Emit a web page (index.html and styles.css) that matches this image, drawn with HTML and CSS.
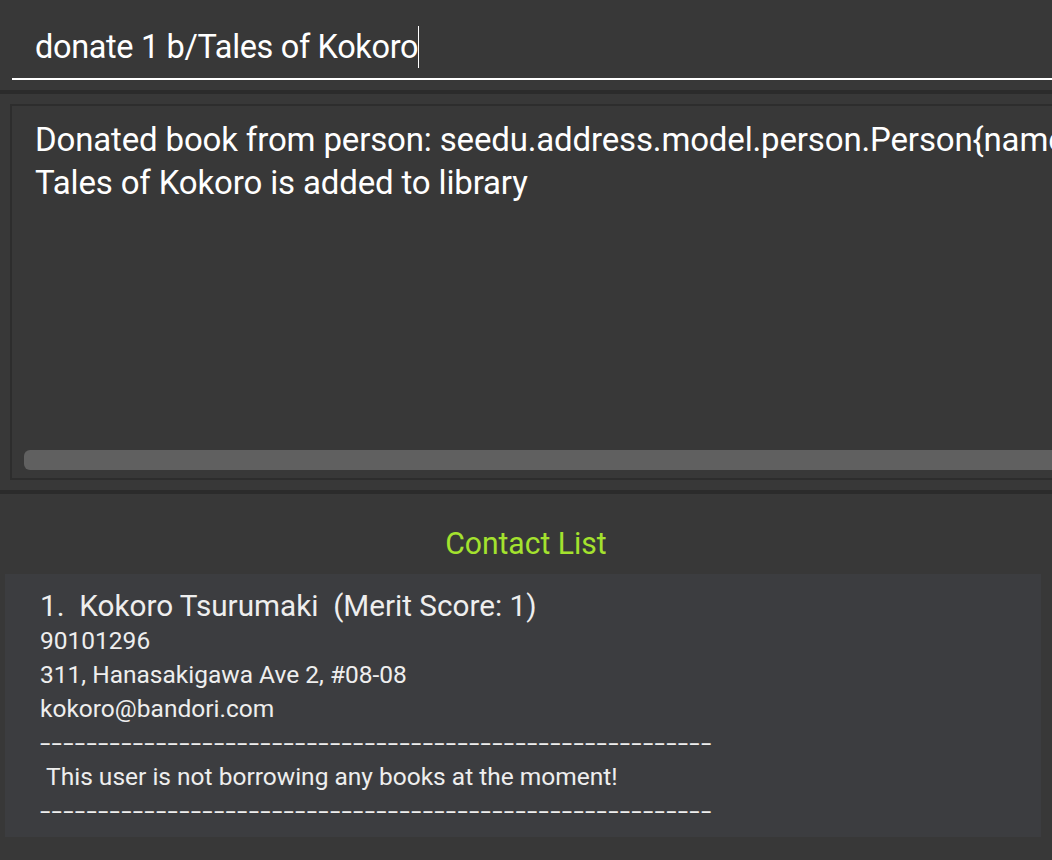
FILE: index.html
```html
<!DOCTYPE html>
<html>
<head>
<meta charset="utf-8">
<link rel="stylesheet" href="styles.css">
</head>
<body>
<div class="app">
  <div class="command">
    <div class="command-field"><span class="command-text">donate 1 b/Tales of Kokoro</span><span class="caret"></span></div>
  </div>
  <div class="divider"></div>
  <div class="result-pane">
    <div class="result-box">
      <div class="result-text">
        <div class="result-line">Donated book from person: seedu.address.model.person.Person{name=Kokoro Tsurumaki, phone=90101296, email=kokoro@bandori.com}</div>
        <div class="result-line">Tales of Kokoro is added to library</div>
      </div>
      <div class="hscroll"><div class="hscroll-thumb"></div></div>
    </div>
  </div>
  <div class="divider"></div>
  <div class="list-pane">
    <div class="list-title"><span class="narrow">Contact List</span></div>
    <div class="list">
      <div class="card">
        <div class="card-name">1.&nbsp; Kokoro Tsurumaki&nbsp; (Merit Score: 1)</div>
        <div class="card-line">90101296</div>
        <div class="card-line">311, Hanasakigawa Ave 2, #08-08</div>
        <div class="card-line">kokoro@bandori.com</div>
        <div class="card-line"><span class="dashes">----------------------------------------------------------</span></div>
        <div class="card-line">&nbsp;This user is not borrowing any books at the moment!</div>
        <div class="card-line"><span class="dashes">----------------------------------------------------------</span></div>
      </div>
    </div>
  </div>
</div>
</body>
</html>
```

FILE: styles.css
```css
html, body {
  margin: 0;
  padding: 0;
  background: #383838;
  overflow: hidden;
}
.app {
  width: 1052px;
  height: 860px;
  display: flex;
  flex-direction: column;
  font-family: Roboto, "Open Sans", sans-serif;
  color: #ffffff;
}
.command {
  height: 90px;
  flex: none;
  box-sizing: border-box;
  padding: 16px 0 0 12px;
}
.command-field {
  height: 64px;
  box-sizing: border-box;
  border-bottom: 2px solid #ffffff;
  padding-left: 23px;
  display: flex;
  align-items: center;
  font-size: 32.5px;
  letter-spacing: -0.35px;
  white-space: pre;
}
.caret {
  display: inline-block;
  width: 1px;
  height: 42px;
  background: #ffffff;
}
.divider {
  height: 4px;
  background: #2b2b2b;
  flex: none;
}
.result-pane {
  height: 396px;
  flex: none;
  box-sizing: border-box;
  padding: 10px 0 10px 10px;
}
.result-box {
  height: 100%;
  box-sizing: border-box;
  border: 2px solid #2d2d2d;
  border-right: none;
  display: flex;
  flex-direction: column;
  overflow: hidden;
}
.result-text {
  flex: 1;
  padding: 12px 0 0 23px;
  font-size: 33px;
  letter-spacing: -0.15px;
  line-height: 43px;
  overflow: hidden;
}
.result-line {
  white-space: pre;
}
.hscroll {
  flex: none;
  padding: 0 0 8px 12px;
}
.hscroll-thumb {
  height: 20px;
  background: #606060;
  border-radius: 6px 0 0 6px;
}
.list-pane {
  flex: 1;
  display: flex;
  flex-direction: column;
}
.list-title {
  text-align: center;
  color: #a4e22e;
  font-size: 32px;
  margin-top: 30px;
  height: 50px;
  line-height: 38px;
}
.narrow {
  display: inline-block;
  transform: scaleX(0.94);
}
.list {
  padding: 0 11px 0 5px;
}
.card {
  background: #3c3d40;
  height: 263px;
  box-sizing: border-box;
  padding: 14px 0 0 35px;
  color: #eeeeee;
}
.card-name {
  font-size: 29.7px;
  line-height: 36px;
  white-space: pre;
}
.card-line {
  font-size: 24.5px;
  line-height: 34px;
  white-space: pre;
}
.dashes {
  display: inline-block;
  font-size: 24px;
  letter-spacing: 0.8px;
  transform: scaleX(1.56);
  transform-origin: left center;
}
```
